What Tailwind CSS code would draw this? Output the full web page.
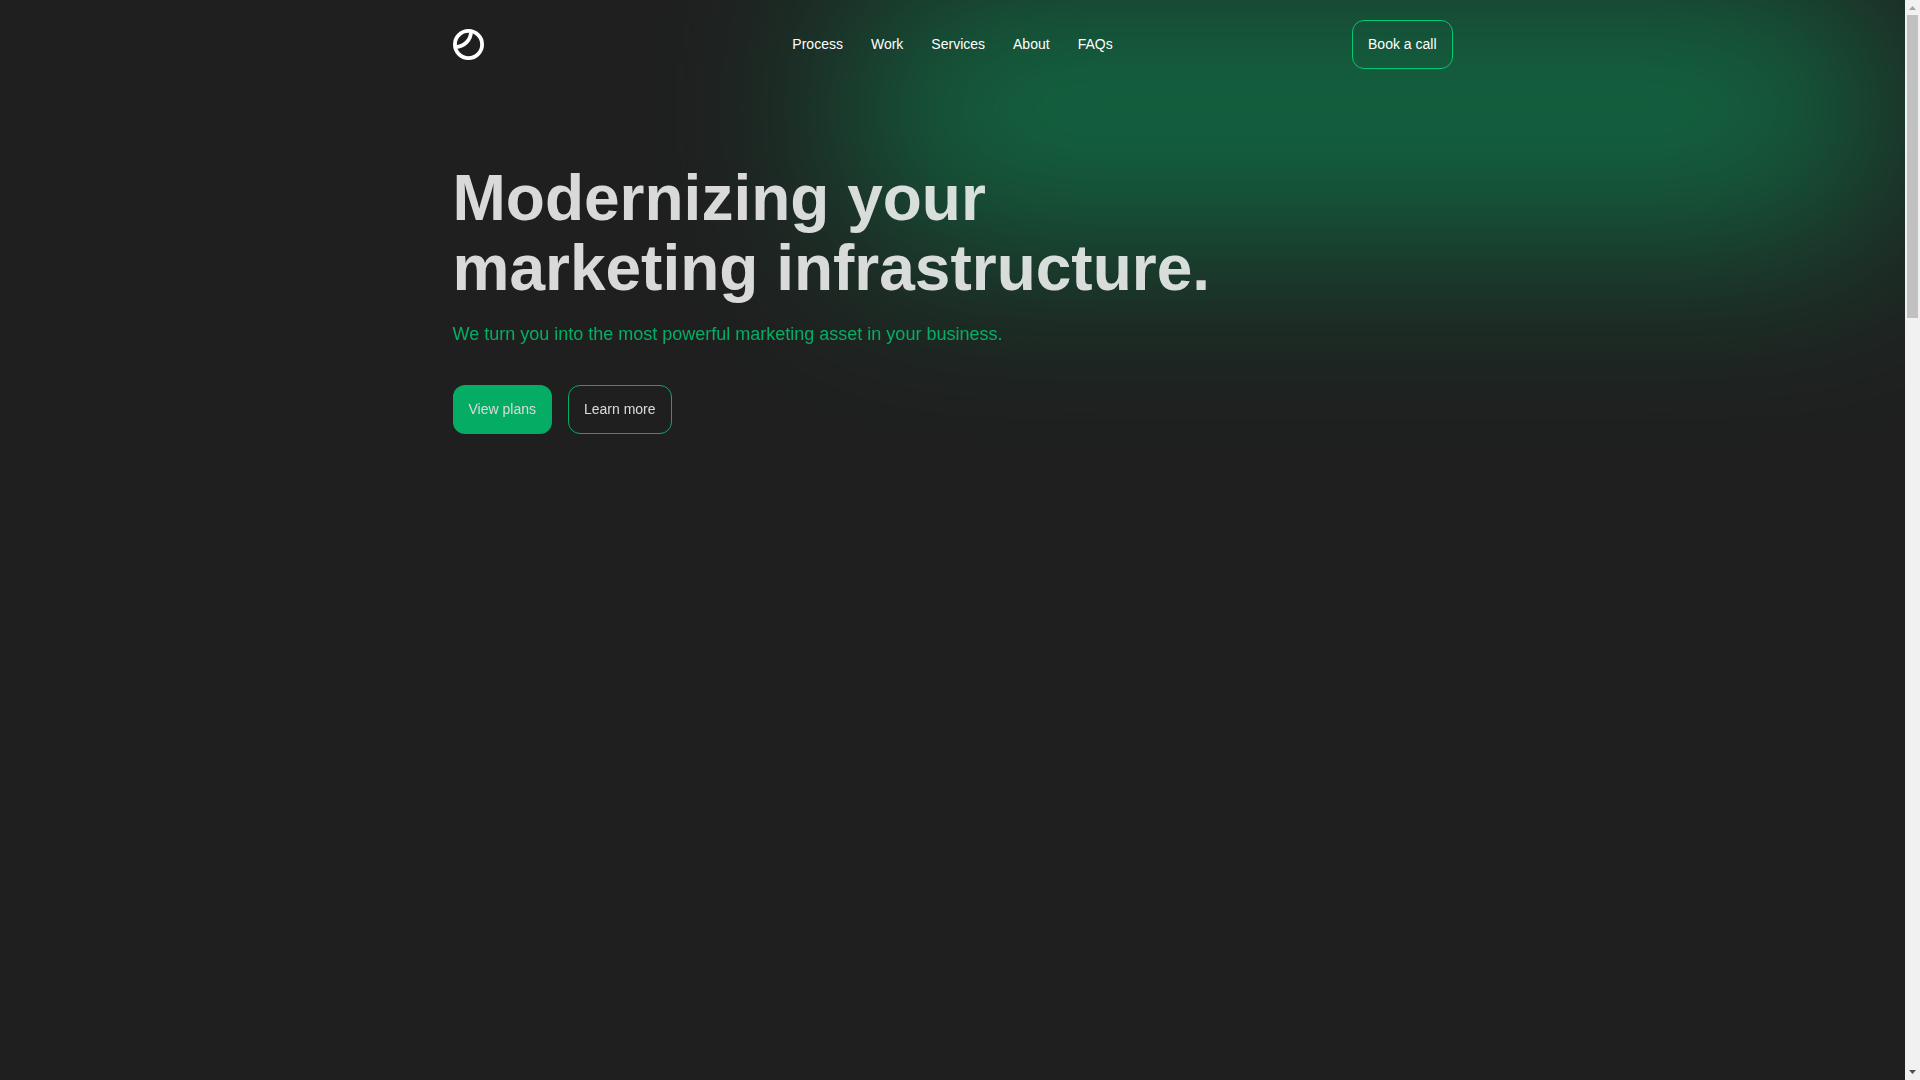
<!DOCTYPE html>
<html lang="en">
<head>
    <meta charset="UTF-8">
    <meta name="viewport" content="width=device-width, initial-scale=1.0">
    <script src="https://cdn.jsdelivr.net/npm/@tailwindcss/browser@4"></script>
    <title>Modernizing your marketing infrastructure</title>
</head>
<body class="flex h-screen overflow-hidden bg-[#1f1f1f] text-white font-['Liberation_Sans',Arial,sans-serif]">
    <div class="relative flex-1 overflow-hidden">
      <!-- green glow behind the hero -->
      <div class="absolute -top-4 left-[45%] right-6 h-[250px] bg-[#00ca72] opacity-45 blur-[100px]"></div>

      <div class="relative w-full max-w-[1000px] mx-auto">
        <header class="grid grid-cols-[1fr_auto_1fr] items-center py-5">
          <a href="#" aria-label="Home" class="justify-self-start">
            <svg class="size-8" viewBox="0 0 32 32" fill="none" stroke="#fff" stroke-width="3.8">
              <circle cx="15.5" cy="15.5" r="13.6"/>
              <path d="M18 2.5A15.5 15.5 0 0 1 2.5 18"/>
            </svg>
          </a>
          <nav class="flex gap-7 text-sm leading-[17px]">
            <a href="#process">Process</a>
            <a href="#work">Work</a>
            <a href="#services">Services</a>
            <a href="#about">About</a>
            <a href="#faqs">FAQs</a>
          </nav>
          <button class="justify-self-end h-[49px] px-[15px] border border-[#00ca72] rounded-xl text-sm leading-[17px]">Book a call</button>
        </header>

        <main class="pt-[74px] opacity-[83%]">
          <h1 class="max-w-[800px] text-[64px] leading-[70px] font-bold">Modernizing your marketing infrastructure.</h1>
          <p class="mt-[17px] text-lg leading-7 text-[#00ca72]">We turn you into the most powerful marketing asset in your business.</p>
          <div class="flex gap-4 mt-[37px]">
            <button class="h-[49px] px-4 bg-[#00ca72] rounded-xl text-sm leading-[17px]">View plans</button>
            <button class="h-[49px] px-[15px] border border-[#00ca72] rounded-xl text-sm leading-[17px]">Learn more</button>
          </div>
        </main>
      </div>
    </div>

    <!-- scroll track -->
    <div class="flex flex-col items-center w-[15px] h-full bg-[#f1f1f1]">
      <svg class="w-[15px] h-[15px]" viewBox="0 0 15 15" fill="#a3a3a3"><path d="M4 10h7L7.5 6z"/></svg>
      <div class="w-[11px] h-[303px] bg-[#c1c1c1]"></div>
      <svg class="w-[15px] h-[15px] mt-auto" viewBox="0 0 15 15" fill="#505050"><path d="M4 5h7L7.5 9z"/></svg>
    </div>
</body>
</html>
